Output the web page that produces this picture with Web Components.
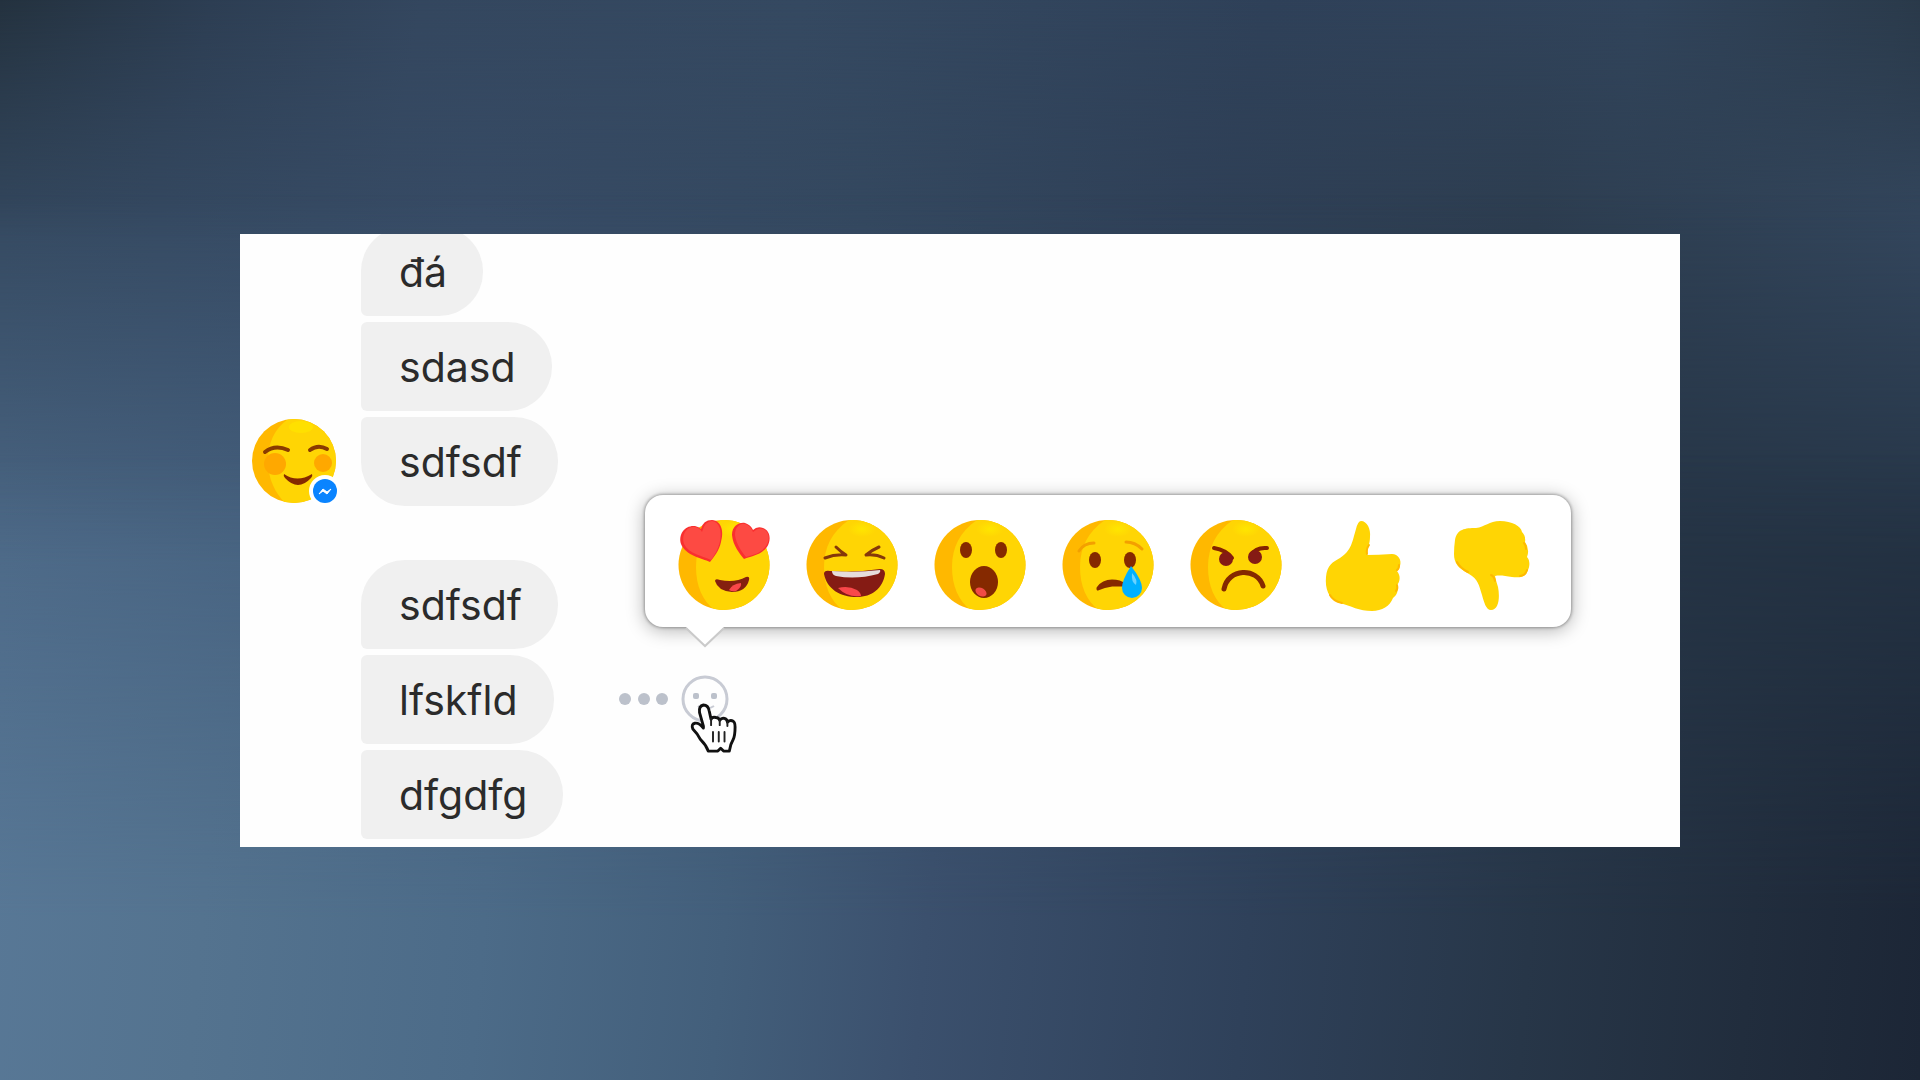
<!DOCTYPE html>
<html lang="vi">
<head>
<meta charset="UTF-8">
<meta name="viewport" content="width=device-width, initial-scale=1">
<title>Messages</title>
<style>
    body {
        margin: 0;
        min-height: 100vh;
        display: flex;
        align-items: center;
        justify-content: center;
        font-family: Inter, "Liberation Sans", sans-serif;
        background: #34475f;
    }
</style>
</head>
<body>
<page-backdrop></page-backdrop>
<chat-panel>
    <message-group>
        <user-avatar slot="avatar"></user-avatar>
        <message-bubble first>đá</message-bubble>
        <message-bubble>sdasd</message-bubble>
        <message-bubble last>sdfsdf</message-bubble>
    </message-group>
    <message-group>
        <message-bubble first>sdfsdf</message-bubble>
        <message-bubble>lfskfld<message-actions slot="actions"></message-actions></message-bubble>
        <message-bubble>dfgdfg</message-bubble>
    </message-group>
</chat-panel>

<script>
const FACE = `
    <defs>
        <clipPath id="face"><ellipse cx="46" cy="45" rx="45.5" ry="45"/></clipPath>
        <radialGradient id="shine">
            <stop offset="0" stop-color="#ffe600"/>
            <stop offset="1" stop-color="#ffd504"/>
        </radialGradient>
    </defs>
    <g clip-path="url(#face)">
        <rect width="92" height="90" fill="#ffb800"/>
        <path d="M46 -2C27 10 18 26 18 47C18 68 26 83 39 92H96V-2Z" fill="#ffd504"/>
        <ellipse cx="56" cy="9" rx="14" ry="8" fill="url(#shine)"/>
    </g>
`;

const REACTIONS = [
    {
        name: 'love',
        art: FACE + `
            <path d="M32 42C24 38 8 36 3 24C0 14 7 5 17 6Q21 7 23 9Q25 0 34 0C44 1 46 12 43 22C41 31 36 37 32 42Z" fill="#f92f2f"/>
            <path d="M33 40C25 36 11 34 6 24C3 14 9 6 17 7Q22 8 24 12Q27 1 34 1C42 2 44 12 42 21C40 30 36 36 33 40Z" fill="#fd4a43"/>
            <path d="M66 39C62 34 55 26 54 15C54 6 61 2 67 3Q73 5 75 10Q79 6 85 8C93 11 93 21 89 27C83 35 74 36 66 39Z" fill="#f92f2f"/>
            <path d="M68 37C64 32 58 24 57 15C57 7 62 3 67 4Q73 6 75 12Q80 7 85 9C92 12 92 20 88 26C82 34 76 34 68 37Z" fill="#fd4a43"/>
            <path d="M37 61Q37 58 42 60Q57 63 68 57Q72 56 71 60Q68 72 54 72Q40 71 37 61Z" fill="#85200f"/>
            <path d="M51 70Q54 64 63 63Q64 67 58 71Q54 72 51 70Z" fill="#f9474a"/>`
    },
    {
        name: 'laugh',
        art: FACE + `
            <path d="M30 27Q35 32 40 35Q29 34 19 38M73 27Q66 30 60 35Q70 34 78 38" fill="none" stroke="#85380a" stroke-width="3" stroke-linecap="round" stroke-linejoin="round"/>
            <path d="M18 54Q18 50 24 51Q48 53 74 49Q79 49 79 54C77 68 66 77 51 77C34 77 21 69 18 54Z" fill="#851b14"/>
            <path d="M26 51Q50 53 74 50Q75 52 72 54Q50 60 30 56Q26 55 26 51Z" fill="#e6dcdc"/>
            <path d="M32 68Q42 65 51 70Q55 73 55 76Q42 78 32 68Z" fill="#f9474a"/>`
    },
    {
        name: 'wow',
        art: FACE + `
            <ellipse cx="32" cy="30" rx="6" ry="8" fill="#852900"/>
            <ellipse cx="67" cy="30" rx="6" ry="8" fill="#852900"/>
            <ellipse cx="50" cy="62" rx="14" ry="16" fill="#852900"/>
            <ellipse cx="47" cy="72" rx="6" ry="4" transform="rotate(30 47 72)" fill="#f14b45"/>`
    },
    {
        name: 'sad',
        art: FACE + `
            <path d="M17 31Q22 23 32 23M64 22Q73 22 80 29" fill="none" stroke="#f3a000" stroke-width="3" stroke-linecap="round"/>
            <ellipse cx="33" cy="40" rx="6" ry="8" fill="#852900"/>
            <ellipse cx="68" cy="40" rx="6" ry="8" fill="#852900"/>
            <path d="M36 68Q41 61 50 61Q58 61 63 65Q56 65 50 65Q42 66 36 69Z" fill="#852900" stroke="#852900" stroke-width="3" stroke-linejoin="round"/>
            <path d="M69 46Q80 60 80 68A10 10 0 0 1 60 68Q60 60 69 46Z" fill="#00b0ff"/>
            <path d="M70 53Q76 60 74 65Q69 62 70 53Z" fill="#6bd2ff"/>`
    },
    {
        name: 'angry',
        art: FACE + `
            <path d="M24 28Q36 30 42 38M77 28Q66 27 61 35" fill="none" stroke="#852200" stroke-width="4" stroke-linecap="round"/>
            <circle cx="36" cy="39" r="7" fill="#851b14"/>
            <circle cx="65" cy="37" r="7" fill="#851b14"/>
            <path d="M34 69C38 48 67 47 73 66" fill="none" stroke="#852900" stroke-width="5" stroke-linecap="round"/>`
    },
    {
        name: 'like',
        art: `
            <path d="M43 1C49 1 53 9 52 17C52 24 49 29 49 35Q60 35 74 34C80 34 84 40 82 46Q81 50 79 51C83 56 82 62 79 65C81 70 79 75 75 78C72 86 64 91 54 91C41 91 33 86 22 83C10 79 7 68 8 57C9 45 15 42 22 38C34 30 34 22 38 9Q40 1 43 1Z" fill="#ffd504"/>
            <path d="M51 25Q48 29 49 34M81 45Q81 49 79 50M79 65Q80 69 78 71M12 75Q15 81 24 83" fill="none" stroke="#ffb900" stroke-width="2" stroke-linecap="round"/>`
    },
    {
        name: 'dislike',
        art: `
            <path d="M9 20C11 9 19 8 30 8C39 7 43 1 54 1C66 1 75 6 76 12Q80 16 79 22Q84 29 81 37C84 40 84 46 82 50C80 57 74 58 66 57C59 56 54 55 49 56Q50 61 52 67C54 77 53 90 45 90C40 90 38 82 36 75C33 65 32 59 23 54C12 48 8 43 8 34Q8 27 9 20Z" fill="#ffd504"/>
            <path d="M11 42Q14 48 22 52M45 55Q48 56 49 61M78 23Q80 25 80 29M81 50Q79 56 74 56" fill="none" stroke="#ffb900" stroke-width="2" stroke-linecap="round"/>`
    }
];

// Wallpaper: horizontal colour ramps that fade into each other down the page
class PageBackdrop extends HTMLElement {
    constructor() {
        super();
        this.attachShadow({ mode: 'open' }).innerHTML = `
            <style>
                :host {
                    position: fixed;
                    inset: 0;
                    z-index: -1;
                    display: grid;
                }
                div { grid-area: 1 / 1; }
                .top {
                    background: linear-gradient(100deg, #24323f 0%, #2d3e53 10%, #34475f 20%, #354961 38%, #2f4159 60%, #31445b 78%, #2b3b4c 90%, #202c38 100%);
                }
                .upper {
                    background: linear-gradient(90deg, #34485f 0%, #374b65 25%, #34485f 45%, #2f4057 62%, #2d3d4f 80%, #314358 92%, #34475e 100%);
                    mask-image: linear-gradient(transparent 0%, #000 22%);
                }
                .middle {
                    background: linear-gradient(90deg, #4b6785 0%, #45607e 15%, #3c5470 35%, #32465e 55%, #28384b 78%, #253445 88%, #253445 100%);
                    mask-image: linear-gradient(transparent 18%, #000 52%);
                }
                .bottom {
                    background: linear-gradient(95deg, #597998 0%, #54738f 14%, #4c6b88 28%, #435f7b 40%, #3b506d 50%, #2f415a 66%, #273648 80%, #212d3d 91%, #1c2636 100%);
                    mask-image: linear-gradient(transparent 42%, #000 85%);
                }
            </style>
            <div class="top"></div>
            <div class="upper"></div>
            <div class="middle"></div>
            <div class="bottom"></div>
        `;
    }
}

class ChatPanel extends HTMLElement {
    constructor() {
        super();
        this.attachShadow({ mode: 'open' }).innerHTML = `
            <style>
                :host {
                    display: block;
                    width: 75%;
                    background: #fefefe;
                    overflow: hidden;
                }
                .thread {
                    display: flex;
                    flex-direction: column;
                    gap: 54px;
                    margin-top: -7px;
                    padding: 0 11px 8px;
                }
            </style>
            <div class="thread" role="log"><slot></slot></div>
        `;
    }
}

class MessageGroup extends HTMLElement {
    constructor() {
        super();
        this.attachShadow({ mode: 'open' }).innerHTML = `
            <style>
                :host {
                    display: grid;
                    grid-template-columns: 86px 1fr;
                    gap: 24px;
                    align-items: end;
                }
                .messages {
                    display: flex;
                    flex-direction: column;
                    gap: 6px;
                }
            </style>
            <div><slot name="avatar"></slot></div>
            <div class="messages"><slot></slot></div>
        `;
    }
}

class MessageBubble extends HTMLElement {
    constructor() {
        super();
        this.attachShadow({ mode: 'open' }).innerHTML = `
            <style>
                :host {
                    display: flex;
                    align-items: center;
                    gap: 65px;
                    color: #2b2b2b;
                    font-size: 41px;
                    line-height: 49px;
                }
                .bubble {
                    padding: 21px 36px 19px 38px;
                    background: #f0f0f0;
                    border-radius: 6px 44px 44px 6px;
                }
                :host([first]) .bubble {
                    border-top-left-radius: 44px;
                }
                :host([last]) .bubble {
                    border-bottom-left-radius: 44px;
                }
            </style>
            <div class="bubble"><slot></slot></div>
            <slot name="actions"></slot>
        `;
    }
}

class UserAvatar extends HTMLElement {
    constructor() {
        super();
        this.attachShadow({ mode: 'open' }).innerHTML = `
            <style>
                :host { display: block; }
                svg { display: block; width: 100%; overflow: visible; }
            </style>
            <svg viewBox="0 0 86 88" role="img" aria-label="Avatar">
                <defs>
                    <clipPath id="head"><circle cx="43" cy="43" r="42"/></clipPath>
                </defs>
                <g clip-path="url(#head)">
                    <rect width="86" height="88" fill="#ffb800"/>
                    <path d="M40 -1C24 9 17 24 17 43C17 63 26 78 37 88H88V-1Z" fill="#ffd504"/>
                    <ellipse cx="50" cy="9" rx="12" ry="6" fill="#ffe000"/>
                    <circle cx="24" cy="46" r="11" fill="#ffa800"/>
                    <circle cx="72" cy="45" r="9" fill="#ffa800"/>
                </g>
                <path d="M14 34Q24 26 37 32M59 32Q67 26 76 31" fill="none" stroke="#8a3b00" stroke-width="4" stroke-linecap="round"/>
                <path d="M33 56Q46 65 61 56Q62 58 60 60Q47 74 34 60Q32 58 33 56Z" fill="#852900"/>
                <circle cx="74" cy="73" r="16" fill="#fff"/>
                <circle cx="74" cy="73" r="12" fill="#0a84ff"/>
                <path d="M68 76L72 71L76 74L80 71L76 76L72 73Z" fill="#fff" stroke="#fff"/>
            </svg>
        `;
    }
}

class ReactionPicker extends HTMLElement {
    constructor() {
        super();
        const buttons = REACTIONS.map(r => `
            <button type="button" aria-label="${r.name}">
                <svg viewBox="0 0 92 90">${r.art}</svg>
            </button>`).join('');

        this.attachShadow({ mode: 'open' }).innerHTML = `
            <style>
                :host {
                    display: flex;
                    gap: 36px;
                    padding: 25px 33px 17px;
                    background: #fff;
                    border-radius: 18px;
                    box-shadow: 0 0 3px 1px rgba(0, 0, 0, 0.3), 0 3px 18px 1px rgba(0, 0, 0, 0.28);
                }
                button {
                    padding: 0;
                    border: 0;
                    background: none;
                    cursor: pointer;
                }
                button svg {
                    display: block;
                    width: 92px;
                    height: 90px;
                    overflow: visible;
                }
                .arrow {
                    position: absolute;
                    top: 100%;
                    left: 40px;
                    width: 40px;
                    height: 22px;
                    margin-top: -1px;
                }
            </style>
            ${buttons}
            <svg class="arrow" viewBox="0 0 40 22" aria-hidden="true">
                <path d="M0 0H40L20 20Z" fill="#fff"/>
                <path d="M1 2L20 20L39 2" fill="none" stroke="#cacaca" stroke-width="2"/>
            </svg>
        `;

        this.shadowRoot.querySelectorAll('button').forEach(btn => {
            btn.addEventListener('click', () => {
                this.dispatchEvent(new CustomEvent('react', {
                    detail: { reaction: btn.getAttribute('aria-label') },
                    bubbles: true,
                    composed: true
                }));
            });
        });
    }
}

class MessageActions extends HTMLElement {
    constructor() {
        super();
        this.attachShadow({ mode: 'open' }).innerHTML = `
            <style>
                :host {
                    display: flex;
                    align-items: center;
                    gap: 12px;
                }
                button {
                    display: block;
                    padding: 0;
                    border: 0;
                    background: none;
                    cursor: pointer;
                }
                svg { display: block; }
                .react { position: relative; }
                reaction-picker {
                    position: absolute;
                    bottom: 96px;
                    left: -36px;
                }
                .pointer {
                    position: absolute;
                    top: 28px;
                    left: 8px;
                    pointer-events: none;
                }
            </style>
            <button type="button" aria-label="More">
                <svg width="50" height="12" viewBox="0 0 50 12" fill="#bcc1cb">
                    <circle cx="6" cy="6" r="6"/>
                    <circle cx="25" cy="6" r="6"/>
                    <circle cx="43" cy="6" r="6"/>
                </svg>
            </button>
            <div class="react">
                <button type="button" class="toggle" aria-label="React" aria-expanded="true">
                    <svg width="48" height="48" viewBox="0 0 48 48">
                        <circle cx="24" cy="24" r="22" fill="none" stroke="#c8cbd4" stroke-width="3"/>
                        <rect x="12" y="18" width="6" height="6" rx="2" fill="#bcc1cb"/>
                        <rect x="30" y="18" width="6" height="6" rx="2" fill="#bcc1cb"/>
                        <path d="M17 31Q24 37 33 31" fill="none" stroke="#c8cbd4" stroke-width="2"/>
                    </svg>
                </button>
                <reaction-picker></reaction-picker>
                <svg class="pointer" width="48" height="52" viewBox="0 0 50 54" aria-hidden="true">
                    <path d="M15 24L11 10Q10 3 15 2Q20 2 21 8L23 17Q24 14 28 15Q31 15 32 18Q34 15 37 16Q40 17 40 20Q43 17 46 19Q48 20 48 25Q48 34 46 38Q43 43 42 50H36L33 47L30 50H20Q18 44 12 38Q9 32 4 27Q2 22 6 21Q10 20 15 26Z" fill="#fff" stroke="#111" stroke-width="3" stroke-linejoin="round"/>
                    <path d="M23 16V23M32 18V23M40 20V24M25 30V40M31 30V40M37 30V40" fill="none" stroke="#222" stroke-width="2" stroke-linecap="round"/>
                </svg>
            </div>
        `;

        const toggle = this.shadowRoot.querySelector('.toggle');
        const picker = this.shadowRoot.querySelector('reaction-picker');
        toggle.addEventListener('click', () => {
            const open = toggle.getAttribute('aria-expanded') === 'true';
            toggle.setAttribute('aria-expanded', String(!open));
            picker.style.display = open ? 'none' : '';
        });
    }
}

customElements.define('page-backdrop', PageBackdrop);
customElements.define('reaction-picker', ReactionPicker);
customElements.define('message-actions', MessageActions);
customElements.define('user-avatar', UserAvatar);
customElements.define('message-bubble', MessageBubble);
customElements.define('message-group', MessageGroup);
customElements.define('chat-panel', ChatPanel);
</script>
</body>
</html>
